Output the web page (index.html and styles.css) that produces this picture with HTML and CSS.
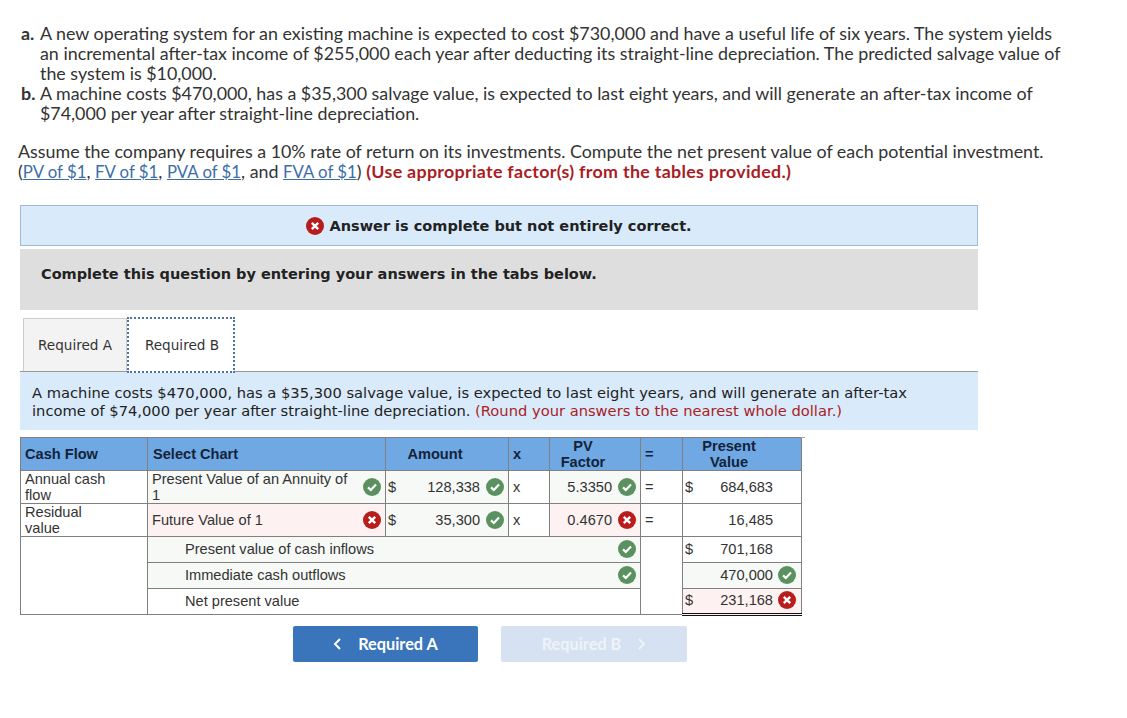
FILE: index.html
```html
<!DOCTYPE html>
<html>
<head>
    <link rel="stylesheet" href="styles.css">
</head>
<body>
    <svg class="defs" width="0" height="0">
        <symbol id="ok" viewBox="0 0 18 18">
            <circle cx="9" cy="9" r="9" fill="#5b9160"/>
            <path d="M5 9.4l2.8 2.6L13 6.6" fill="none" stroke="#fff" stroke-width="2.2"/>
        </symbol>
        <symbol id="bad" viewBox="0 0 18 18">
            <circle cx="9" cy="9" r="9" fill="#b81c1c"/>
            <path d="M5.8 5.8l6.4 6.4M12.2 5.8l-6.4 6.4" fill="none" stroke="#fff" stroke-width="2.4"/>
        </symbol>
    </svg>

    <div class="question">
        <div class="item"><b>a.</b><p>A new operating system for an existing machine is expected to cost $730,000 and have a useful life of six years. The system yields an incremental after-tax income of $255,000 each year after deducting its straight-line depreciation. The predicted salvage value of the system is $10,000.</p></div>
        <div class="item"><b>b.</b><p>A machine costs $470,000, has a $35,300 salvage value, is expected to last eight years, and will generate an after-tax income of $74,000 per year after straight-line depreciation.</p></div>
        <p class="assume">Assume the company requires a 10% rate of return on its investments. Compute the net present value of each potential investment.<br>(<a href="#">PV of $1</a>, <a href="#">FV of $1</a>, <a href="#">PVA of $1</a>, and <a href="#">FVA of $1</a>) <strong>(Use appropriate factor(s) from the tables provided.)</strong></p>
    </div>

    <div class="status"><svg class="icon"><use href="#bad"/></svg> Answer is complete but not entirely correct.</div>
    <div class="prompt">Complete this question by entering your answers in the tabs below.</div>

    <div class="tabs">
        <div class="tab">Required A</div>
        <div class="tab active">Required B</div>
    </div>
    <div class="panel">A machine costs $470,000, has a $35,300 salvage value, is expected to last eight years, and will generate an after-tax income of $74,000 per year after straight-line depreciation. <span class="note">(Round your answers to the nearest whole dollar.)</span></div>

    <table class="chart">
        <colgroup>
            <col class="c1"><col class="c2"><col class="c3"><col class="c4"><col class="c5"><col class="c6"><col class="c7">
        </colgroup>
        <tr class="head">
            <th>Cash Flow</th>
            <th class="select">Select Chart</th>
            <th class="center">Amount</th>
            <th>x</th>
            <th class="center">PV<br>Factor</th>
            <th>=</th>
            <th class="center wide">Present<br>Value</th>
        </tr>
        <tr class="row">
            <td>Annual cash<br>flow</td>
            <td class="good"><div class="cell"><span class="grow wrap">Present Value of an Annuity of 1</span><svg class="icon"><use href="#ok"/></svg></div></td>
            <td class="good"><div class="cell"><span class="cur">$</span><span class="grow num">128,338</span><svg class="icon"><use href="#ok"/></svg></div></td>
            <td>x</td>
            <td class="good"><div class="cell"><span class="grow num">5.3350</span><svg class="icon"><use href="#ok"/></svg></div></td>
            <td>=</td>
            <td><div class="cell"><span class="cur">$</span><span class="grow num">684,683</span><span class="slot"></span></div></td>
        </tr>
        <tr class="row">
            <td>Residual<br>value</td>
            <td class="wrong"><div class="cell"><span class="grow">Future Value of 1</span><svg class="icon"><use href="#bad"/></svg></div></td>
            <td class="good"><div class="cell"><span class="cur">$</span><span class="grow num">35,300</span><svg class="icon"><use href="#ok"/></svg></div></td>
            <td>x</td>
            <td class="wrong"><div class="cell"><span class="grow num">0.4670</span><svg class="icon"><use href="#bad"/></svg></div></td>
            <td>=</td>
            <td><div class="cell"><span class="grow num">16,485</span><span class="slot"></span></div></td>
        </tr>
        <tr class="sum">
            <td rowspan="3"></td>
            <td colspan="4" class="good"><div class="cell"><span class="grow label">Present value of cash inflows</span><svg class="icon"><use href="#ok"/></svg></div></td>
            <td rowspan="3"></td>
            <td class="black-top"><div class="cell"><span class="cur">$</span><span class="grow num">701,168</span><span class="slot"></span></div></td>
        </tr>
        <tr class="sum">
            <td colspan="4" class="good"><div class="cell"><span class="grow label">Immediate cash outflows</span><svg class="icon"><use href="#ok"/></svg></div></td>
            <td class="good"><div class="cell"><span class="grow num">470,000</span><svg class="icon end"><use href="#ok"/></svg></div></td>
        </tr>
        <tr class="sum">
            <td colspan="4"><div class="cell"><span class="grow label">Net present value</span></div></td>
            <td class="wrong total"><div class="cell"><span class="cur">$</span><span class="grow num">231,168</span><svg class="icon end"><use href="#bad"/></svg></div></td>
        </tr>
    </table>

    <div class="nav">
        <button type="button" class="btn"><svg class="arrow" viewBox="0 0 9 12"><path d="M7 1L2 6l5 5" fill="none" stroke="currentColor" stroke-width="2"/></svg>Required A</button>
        <button type="button" class="btn off">Required B<svg class="arrow after" viewBox="0 0 9 12"><path d="M2 1l5 5-5 5" fill="none" stroke="currentColor" stroke-width="2"/></svg></button>
    </div>
</body>
</html>
```

FILE: styles.css
```css
body {
    margin: 0;
    padding: 23px 0 0 18px;
    font-family: "Lato", sans-serif;
    color: #333;
    background: #fff;
}
.defs {
    position: absolute;
}
a {
    color: #3d6ea8;
    font-size: 16.8px;
    line-height: 16px;
}
p {
    margin: 0;
}
.question {
    width: 1046px;
    font-size: 17.85px;
    line-height: 20px;
}
.item {
    display: flex;
    padding-left: 3px;
}
.item b {
    width: 19px;
    flex: none;
}
.assume {
    margin-top: 18px;
}
.assume strong {
    color: #a91d25;
    letter-spacing: 0.3px;
}
.status {
    width: 956px;
    height: 39px;
    margin: 24px 0 0 2px;
    border: 1px solid #9dbbd8;
    background: #d9eafa;
    font: bold 14.5px/40px "DejaVu Sans", sans-serif;
    color: #222;
    text-align: center;
}
.status .icon {
    vertical-align: -4px;
}
.prompt {
    width: 937px;
    height: 61px;
    margin: 3px 0 0 2px;
    padding-left: 21px;
    background: #dedede;
    font: bold 14.5px/51px "DejaVu Sans", sans-serif;
    color: #222;
}
.tabs {
    display: flex;
    height: 53px;
    margin: 8px 0 0 5px;
}
.tab {
    width: 104px;
    padding-top: 17px;
    box-sizing: border-box;
    background: #f3f3f3;
    border: 1px solid #ccc;
    border-bottom: none;
    font: 13.6px/18px "DejaVu Sans", sans-serif;
    color: #333;
    text-align: center;
}
.tab.active {
    width: 108px;
    height: 56px;
    margin-top: -1px;
    padding: 17px 0 0 2px;
    background: #fff;
    border: 2px dotted #4a74a8;
}
.panel {
    width: 908px;
    height: 46px;
    margin-left: 2px;
    padding: 12px 38px 0 12px;
    border-top: 1px solid #999;
    background: #d9eafa;
    font: 14.7px/18px "DejaVu Sans", sans-serif;
    color: #222;
}
.note {
    color: #a91d25;
}
.chart {
    width: 781px;
    margin: 7px 0 0 2px;
    border-collapse: collapse;
    table-layout: fixed;
    font: 14.6px/16px "Liberation Sans", sans-serif;
    color: #333;
}
.c1 { width: 127px; }
.c2 { width: 238px; }
.c3 { width: 123px; }
.c4 { width: 41px; }
.c5 { width: 91px; }
.c6 { width: 42px; }
.c7 { width: 119px; }
.chart th,
.chart td {
    border: 1px solid #808080;
    padding: 0 4px;
}
.chart th {
    background: #6fa8e2;
    color: #14233a;
    text-align: left;
}
.chart th.select {
    padding-left: 5px;
}
.chart th.center {
    padding-right: 28px;
    text-align: center;
}
.chart th.wide {
    position: relative;
    padding-right: 30px;
}
.chart th.wide::after {
    content: "";
    position: absolute;
    top: -1px;
    left: 100%;
    width: 4px;
    height: 1px;
    background: #aaa;
}
.head,
.row {
    height: 33px;
}
.sum {
    height: 26px;
}
.chart .sum td {
    padding-bottom: 2px;
}
.good {
    background: #f6f9f6;
}
.wrong {
    background: #fdf2f1;
}
.cell {
    display: flex;
    align-items: center;
}
.grow {
    flex: 1;
}
.wrap {
    padding-right: 8px;
}
.cur {
    margin-left: -2px;
}
.num {
    padding-right: 6px;
    text-align: right;
}
.label {
    padding-left: 33px;
}
.icon {
    width: 18px;
    height: 18px;
    flex: none;
}
.slot {
    width: 18px;
    flex: none;
}
.icon.end {
    margin: 0 1px 0 -1px;
}
.chart td.black-top {
    border-top: 1px solid #111;
}
.chart td.total {
    border-top: 1px solid #111;
    border-bottom: 3px double #111;
}
.nav {
    display: flex;
    gap: 23px;
    margin: 10px 0 0 275px;
}
.btn {
    width: 185px;
    height: 36px;
    padding-bottom: 2px;
    border: none;
    border-radius: 2px;
    background: #3a75bb;
    color: #fff;
    font: bold 16.3px "Lato", sans-serif;
}
.btn.off {
    width: 186px;
    background: #d6e2f1;
    color: #eef3f9;
}
.arrow {
    width: 9px;
    height: 12px;
    margin-right: 16px;
}
.arrow.after {
    margin: 0 0 0 16px;
}
```
